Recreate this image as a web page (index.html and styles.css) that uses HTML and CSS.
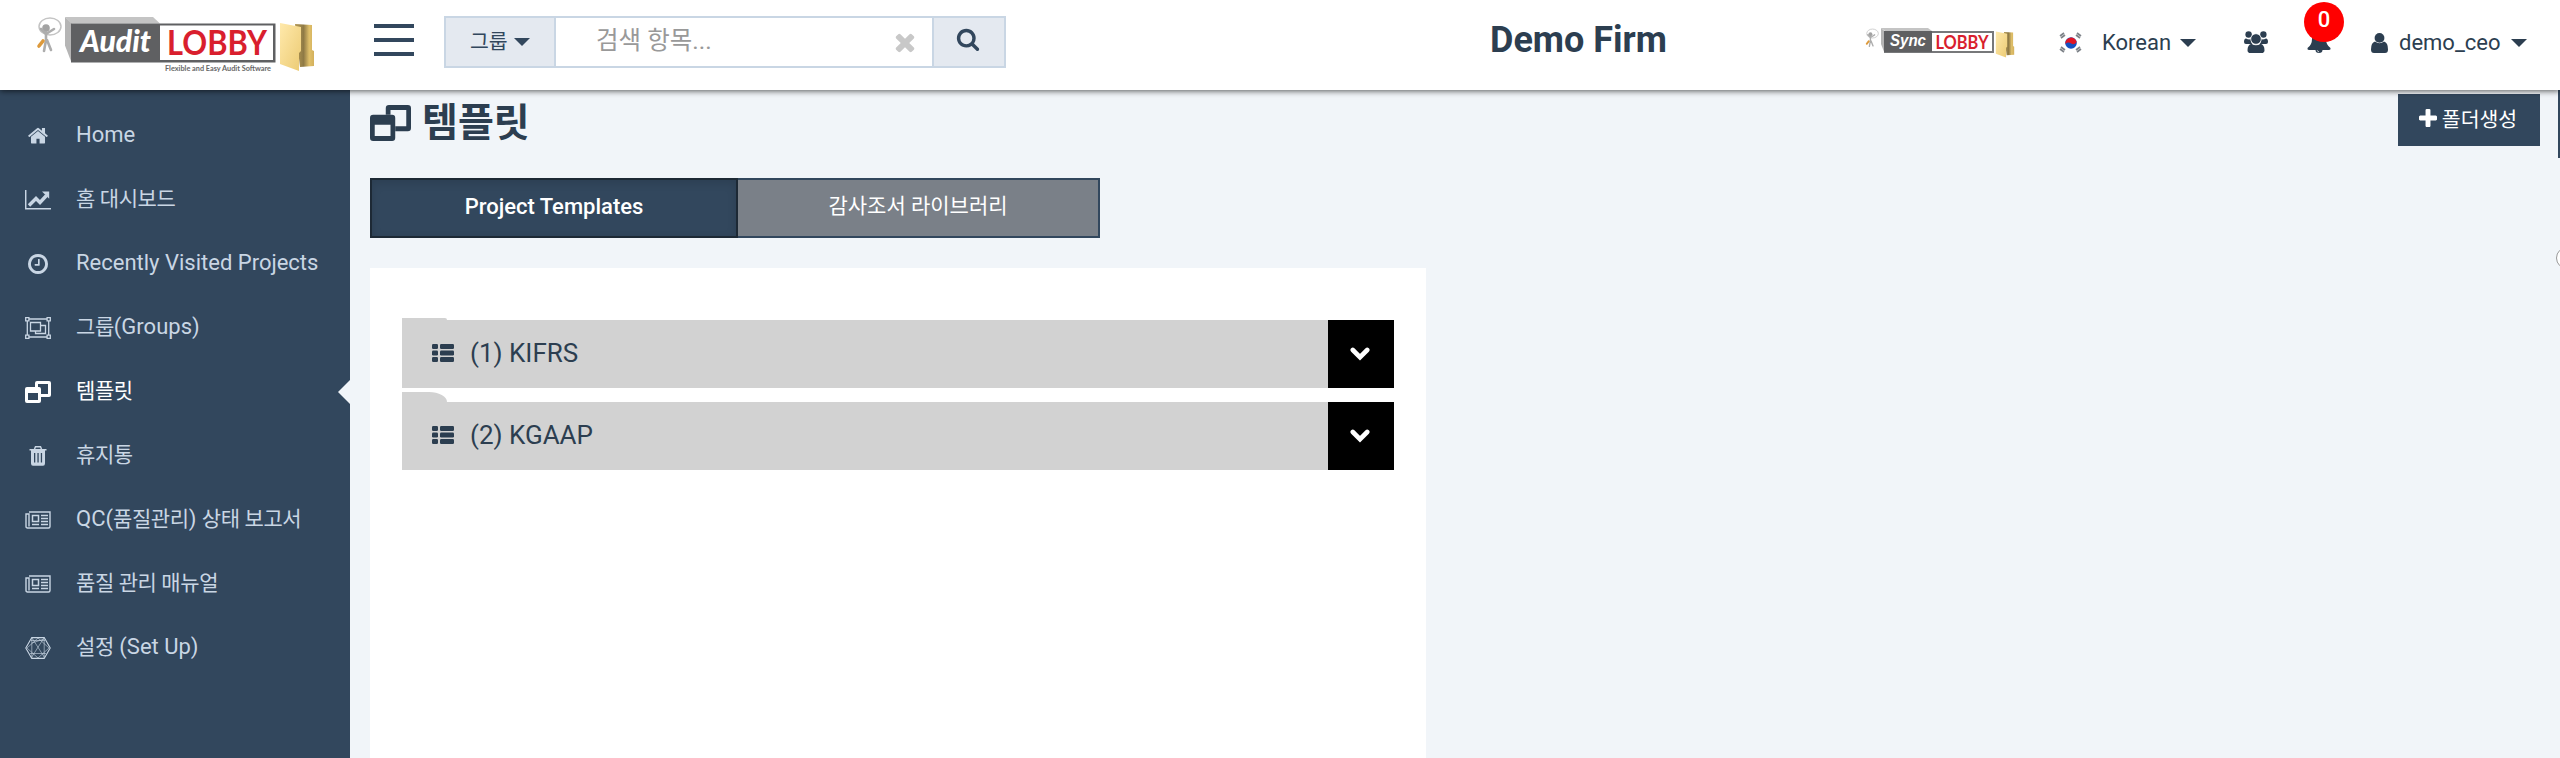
FILE: index.html
```html
<!DOCTYPE html>
<html lang="ko">
<head>
<meta charset="utf-8">
<title>Audit Lobby</title>
<link rel="stylesheet" href="styles.css">
</head>
<body>
<svg class="defs" width="0" height="0">
  <defs>
    <linearGradient id="gold" x1="0" y1="0" x2="1" y2="1"><stop offset="0" stop-color="#ffe9ab"/><stop offset="1" stop-color="#eccb74"/></linearGradient>
    <linearGradient id="goldback" x1="0" y1="0" x2="1" y2="0"><stop offset="0" stop-color="#b59a55"/><stop offset=".45" stop-color="#8f7a45"/><stop offset=".75" stop-color="#e0c06a"/><stop offset="1" stop-color="#d3b05c"/></linearGradient>
    <symbol id="mascot" viewBox="0 0 26 38">
      <ellipse cx="14" cy="10.500" rx="11" ry="8.500" fill="none" stroke="#c4c4c4" stroke-width="1.500"/>
      <circle cx="10" cy="12" r="3.800" fill="#a3a3a3"/>
      <path d="M10 16v9M10 18l-5-5M10 18l8-5M10 24l-2 11M11 24l4 10" stroke="#adadad" stroke-width="2.600" fill="none" stroke-linecap="round"/>
      <path d="M3 30l4-5" stroke="#dd9a3c" stroke-width="3.600" stroke-linecap="round"/>
    </symbol>
    <symbol id="folder" viewBox="0 0 36 50">
      <path d="M16 2l17 1v25l2 1v15l-14 1z" fill="url(#goldback)"/>
      <path d="M1 1l21 4v24l-2 2v18l-19-7z" fill="url(#gold)"/>
    </symbol>
    <symbol id="clone" viewBox="0 0 26 22">
      <path d="M12 0h12q2 0 2 2v12q0 2-2 2h-8v-3h7v-10h-10v3h-3v-4q0-2 2-2z"/>
      <path fill-rule="evenodd" d="M2 6h12q2 0 2 2v12q0 2-2 2h-12q-2 0-2-2v-12q0-2 2-2zM3 12v7h10v-7z"/>
    </symbol>
    <symbol id="news" viewBox="0 0 26 18">
      <path d="M4 1h21v14.500q0 1.500-1.500 1.500h-21q-1.500 0-1.500-1.500v-12.500h3v12.500" fill="none" stroke="currentColor" stroke-width="1.400"/>
      <path d="M7.500 4.500h6v6h-6z" fill="none" stroke="currentColor" stroke-width="1.500"/>
      <path d="M16 4.500h7M16 7.500h7M16 10.500h7M7 13.500h7M16 13.500h7" stroke="currentColor" stroke-width="1.300"/>
    </symbol>
    <symbol id="list" viewBox="0 0 22 18">
      <rect width="6" height="5" rx="1.200"/><rect x="8" width="14" height="5" rx="1.200"/>
      <rect y="6.500" width="6" height="5" rx="1.200"/><rect x="8" y="6.500" width="14" height="5" rx="1.200"/>
      <rect y="13" width="6" height="5" rx="1.200"/><rect x="8" y="13" width="14" height="5" rx="1.200"/>
    </symbol>
    <symbol id="chevron" viewBox="0 0 20 14"><path d="M2.800 3l7.200 7.200 7.200-7.200" fill="none" stroke="#fff" stroke-width="4.600" stroke-linecap="round"/></symbol>
  </defs>
</svg>

<header class="topbar">
  <a class="logo">
    <svg width="280" height="58" viewBox="36 15 280 58">
      <use href="#mascot" x="36" y="16" width="26" height="38"/>
      <path d="M65 17h88l7 6.500h-89z" fill="#c4c4c4"/>
      <path d="M65 17l6.500 6.500v39l-6.500-17z" fill="#b5b5b5"/>
      <path d="M71 23.500h204.500v39h-204.500z" fill="#5f6062"/>
      <path d="M160 25.500h113v34.500h-113z" fill="#fff"/>
      <text class="logo-word" x="80" y="52" textLength="71" lengthAdjust="spacingAndGlyphs">Audit</text>
      <text class="logo-lobby" x="167" y="55" textLength="100" lengthAdjust="spacingAndGlyphs">LOBBY</text>
      <text class="logo-tag" x="165" y="71" textLength="106" lengthAdjust="spacingAndGlyphs">Flexible and Easy Audit Software</text>
      <use href="#folder" x="279" y="22" width="36" height="50"/>
    </svg>
  </a>
  <button class="burger"><i></i><i></i><i></i></button>
  <div class="search">
    <div class="search-scope">그룹<i class="caret"></i></div>
    <div class="search-input"><span>검색 항목...</span>
      <svg width="28" height="28" viewBox="0 0 1792 1792" fill="#c8c8c8"><path d="M1490 1322q0 40-28 68l-136 136q-28 28-68 28t-68-28l-294-294-294 294q-28 28-68 28t-68-28l-136-136q-28-28-28-68t28-68l294-294-294-294q-28-28-28-68t28-68l136-136q28-28 68-28t68 28l294 294 294-294q28-28 68-28t68 28l136 136q28 28 28 68t-28 68l-294 294 294 294q28 28 28 68z"/></svg>
    </div>
    <div class="search-go"><svg width="24" height="24" viewBox="0 0 1792 1792"><path d="M1216 832q0-185-131.500-316.500t-316.500-131.500-316.500 131.500-131.500 316.500 131.500 316.500 316.500 131.500 316.500-131.500 131.500-316.500zm512 832q0 52-38 90t-90 38q-54 0-90-38l-343-342q-179 124-399 124-143 0-273.500-55.500t-225-150-150-225-55.500-273.500 55.500-273.500 150-225 225-150 273.500-55.500 273.500 55.500 225 150 150 225 55.500 273.500q0 220-124 399l343 343q37 37 37 90z"/></svg></div>
  </div>
  <h2 class="firm">Demo Firm</h2>
  <nav class="tools">
    <svg class="sync" width="150" height="32" viewBox="1865 27 150 32">
      <use href="#mascot" x="1865" y="28" width="14" height="20"/>
      <path d="M1881 28h47l4 3h-47z" fill="#c4c4c4"/>
      <path d="M1881 28l3.500 3v22l-3.500-9z" fill="#b5b5b5"/>
      <path d="M1884 31h110v22h-110z" fill="#77787a"/>
      <path d="M1884 31h48v21h-48z" fill="#5f6062"/>
      <path d="M1932 33h60v18h-60z" fill="#fff"/>
      <text class="sync-word" x="1890" y="46" textLength="36" lengthAdjust="spacingAndGlyphs">Sync</text>
      <text class="sync-lobby" x="1935.500" y="48.500" textLength="53" lengthAdjust="spacingAndGlyphs">LOBBY</text>
      <use href="#folder" x="1995" y="31" width="20" height="27"/>
    </svg>
    <div class="lang">
      <svg width="24" height="22" viewBox="0 0 24 22">
        <path d="M1 4l4-3M2 6l4-3M18 1l4 3M17 3l4 3M1 17l4 3M2 15l4 3M18 20l4-3M17 18l4-3" stroke="#7d8288" stroke-width="1.700"/>
        <circle cx="12" cy="11" r="5.800" fill="#1450c0"/>
        <path d="M6.300 12a5.800 5.800 0 0 1 11.400-2q-2.500 3.500-5.500 1.500t-5.900.500z" fill="#e01525"/>
      </svg>
      <span>Korean</span><i class="caret"></i>
    </div>
    <svg class="users" width="24" height="22" viewBox="0 0 24 22">
      <circle cx="4.600" cy="3.500" r="3.200"/><circle cx="19.400" cy="3.500" r="3.200"/>
      <path d="M2 7.500q3 1.500 5 .5-.500 3 1.200 5h-6.200q-2 0-2-2 0-3.500 2-3.500zM22 7.500q-3 1.500-5 .5.500 3-1.200 5h6.200q2 0 2-2 0-3.500-2-3.500z"/>
      <circle cx="12" cy="8" r="5.300" stroke="#fff" stroke-width=".8"/>
      <path d="M7.500 12.700q4.500 3 9 0 4 1 4 6.500 0 2.800-3 2.800h-11q-3 0-3-2.800 0-5.500 4-6.500z"/>
    </svg>
    <div class="bell">
      <svg width="24" height="24" viewBox="0 0 24 24"><path d="M12 0q7 2 7 10 0 6 4.500 9 .5 2-1.500 2h-6.500q0 3-3.500 3t-3.500-3h-6.500q-2 0-1.500-2 4.500-3 4.500-9 0-8 7-10z"/><path d="M10.300 21.300q.2 1.500 1.800 1.500" fill="none" stroke="#fff" stroke-width=".7"/></svg>
      <span class="badge">0</span>
    </div>
    <div class="user">
      <svg width="17" height="20" viewBox="0 0 17 20"><circle cx="8.500" cy="4.900" r="4.900"/><path d="M4 8.500q4.500 3.500 9 0 4 1 4 8 0 3.500-3 3.500h-11q-3 0-3-3.500 0-7 4-8z"/></svg>
      <span>demo_ceo</span><i class="caret"></i>
    </div>
  </nav>
</header>

<div class="layout">
  <aside class="sidebar">
    <a class="item"><svg width="20" height="20" viewBox="60 100 1672 1640"><path fill="currentColor" d="M1472 992v480q0 26-19 45t-45 19h-384v-384h-256v384h-384q-26 0-45-19t-19-45v-480q0-1 .5-3t.5-3l575-474 575 474q1 2 1 6zm223-69l-62 74q-8 9-21 11h-3q-13 0-21-7l-692-577-692 577q-12 8-24 7-13-2-21-11l-62-74q-8-10-7-23.500t11-21.500l719-599q32-26 76-26t76 26l244 204v-195q0-14 9-23t23-9h192q14 0 23 9t9 23v408l219 182q10 8 11 21.500t-7 23.500z"/></svg><span>Home</span></a>
    <a class="item"><svg width="26" height="20" viewBox="0 0 26 20"><path d="M.7 0v18.800h25.300" fill="none" stroke="currentColor" stroke-width="1.500"/><path d="M4 15.500l7-7 4 4 6.500-7" fill="none" stroke="currentColor" stroke-width="3.400"/><path d="M17 1.500h7.200v7.200z" fill="currentColor"/></svg><span><em>홈 대시보드</em></span></a>
    <a class="item"><svg width="20" height="20" viewBox="128 128 1536 1536"><path fill="currentColor" d="M1024 544v448q0 14-9 23t-23 9h-320q-14 0-23-9t-9-23v-64q0-14 9-23t23-9h224v-352q0-14 9-23t23-9h64q14 0 23 9t9 23zm416 352q0-148-73-273t-198-198-273-73-273 73-198 198-73 273 73 273 198 198 273 73 273-73 198-198 73-273zm224 0q0 209-103 385.500t-279.500 279.500-385.500 103-385.500-103-279.500-279.500-103-385.500 103-385.500 279.500-279.500 385.500-103 385.500 103 279.500 279.500 103 385.500z"/></svg><span>Recently Visited Projects</span></a>
    <a class="item"><svg width="26" height="22" viewBox="0 0 26 22" fill="none" stroke="currentColor" stroke-width="1.300"><path d="M4 2h18M4 20h18M2.300 4v14M23.700 4v14M.7.7h3.200v3.200h-3.200zM22.100.7h3.200v3.200h-3.200zM.7 18.100h3.200v3.200h-3.200zM22.100 18.100h3.200v3.200h-3.200zM5.500 5.500h10v8.500h-10zM16 8.500h4.500v8h-10v-2"/></svg><span><em>그룹</em>(Groups)</span></a>
    <a class="item active"><svg width="26" height="22"><use href="#clone" fill="currentColor"/></svg><span><em>템플릿</em></span></a>
    <a class="item"><svg width="18" height="20" viewBox="0 0 18 20"><path d="M5.500 3l1-2.200h5l1 2.200" fill="none" stroke="currentColor" stroke-width="1.500"/><path fill="currentColor" fill-rule="evenodd" d="M.5 3h17v1.600h-1.500v13q0 2.200-2 2.200h-10q-2 0-2-2.200v-13h-1.500zM5 7v9.500h1.300v-9.500zM8.400 7v9.500h1.300v-9.500zM11.800 7v9.500h1.300v-9.500z"/></svg><span><em>휴지통</em></span></a>
    <a class="item"><svg width="26" height="18"><use href="#news"/></svg><span>QC(<em>품질관리</em>) <em>상태 보고서</em></span></a>
    <a class="item"><svg width="26" height="18"><use href="#news"/></svg><span><em>품질 관리 매뉴얼</em></span></a>
    <a class="item"><svg width="26" height="22" viewBox="0 0 26 22" fill="none" stroke="currentColor" stroke-width=".6"><path stroke-width="1.100" d="M6.800.6h12.400l6 10.400-6 10.400h-12.400l-6-10.400z"/><path d="M6.800.6l12.800 20M19.200.6l-12.800 20M6 3.500h14M5 16.500h16M6.800 1v20M19.200 1v20M2 11l11-10 11 10-11 10zM7 6l12-4"/></svg><span><em>설정</em> (Set Up)</span></a>
  </aside>

  <main class="content">
    <div class="heading">
      <h1><svg width="41" height="36" viewBox="0 0 26 22" preserveAspectRatio="none"><use href="#clone" width="26" height="22"/></svg>템플릿</h1>
      <button class="create"><svg width="18" height="18" viewBox="192 128 1408 1408"><path d="M1600 736v192q0 40-28 68t-68 28h-416v416q0 40-28 68t-68 28h-192q-40 0-68-28t-28-68v-416h-416q-40 0-68-28t-28-68v-192q0-40 28-68t68-28h416v-416q0-40 28-68t68-28h192q40 0 68 28t28 68v416h416q40 0 68 28t28 68z"/></svg>폴더생성</button>
    </div>
    <div class="tabs"><a class="tab on">Project Templates</a><a class="tab">감사조서 라이브러리</a></div>
    <section class="panel">
      <div class="row flat"><svg width="22" height="18"><use href="#list"/></svg><span>(1) KIFRS</span><b><svg width="20" height="14"><use href="#chevron"/></svg></b></div>
      <div class="row"><svg width="22" height="18"><use href="#list"/></svg><span>(2) KGAAP</span><b><svg width="20" height="14"><use href="#chevron"/></svg></b></div>
    </section>
    <i class="edge-bar"></i>
    <i class="edge-dot"></i>
  </main>
</div>
</body>
</html>
```
FILE: styles.css
```css
* { box-sizing: border-box; }
body {
  margin: 0;
  height: 758px;
  overflow: hidden;
  display: flex;
  flex-direction: column;
  background: #f1f5f9;
  color: #2c3e50;
  font-family: Roboto, "Noto Sans CJK KR", sans-serif;
  font-size: 22px;
}
svg { display: block; flex: none; }
svg.defs { position: absolute; }
button { border: 0; padding: 0; font: inherit; }

.topbar {
  position: relative;
  z-index: 2;
  flex: none;
  height: 90px;
  display: flex;
  align-items: flex-start;
  background: #fff;
  box-shadow: 0 1px 6px rgba(0, 0, 0, .65);
  fill: #2c3e50;
}
.logo { padding: 15px 0 0 36px; width: 374px; flex: none; }
.logo-word { font: italic 900 31px Lato, sans-serif; fill: #fff; }
.logo-lobby { font: 700 35px Lato, sans-serif; fill: #d91f2e; }
.logo-tag { font: 700 7.500px Lato, sans-serif; fill: #666; }

.burger {
  width: 40px;
  margin-top: 24px;
  display: flex;
  flex-direction: column;
  gap: 10px;
  background: none;
}
.burger i { height: 4px; width: 40px; background: #32475d; }

.search {
  margin: 16px 0 0 30px;
  width: 562px;
  height: 52px;
  display: flex;
  border: 2px solid #c9d6e4;
  flex: none;
}
.search-scope {
  width: 110px;
  display: flex;
  align-items: center;
  gap: 6px;
  padding: 0 0 4px 24px;
  background: #e4e9f0;
  border-right: 2px solid #c9d6e4;
  color: #32475d;
  font-size: 20.500px;
}
.caret {
  width: 16px;
  border: 8px solid transparent;
  border-top-color: currentColor;
  border-bottom: 0;
}
.search-scope .caret { margin-top: 4px; }
.search-input {
  flex: 1;
  display: flex;
  align-items: center;
  justify-content: space-between;
  padding: 0 13px 0 40px;
  color: #999;
  font-size: 24.500px;
}
.search-input span { line-height: 36px; margin-top: -2px; }
.search-go {
  width: 72px;
  padding: 9px 0 0 22px;
  background: #e4e9f0;
  border-left: 2px solid #c9d6e4;
  fill: #32475d;
}
.firm { margin: 19px 0 0 484px; width: 375px; font-size: 36px; line-height: 42px; font-weight: 700; }
.tools { display: flex; align-items: flex-start; }
.sync { margin-top: 27px; }
.sync-word { font: italic 700 16px "Liberation Sans", sans-serif; fill: #fff; }
.sync-lobby { font: 700 18.500px Lato, sans-serif; fill: #d91f2e; }
.lang { display: flex; align-items: center; height: 26px; margin: 30px 0 0 44px; width: 185px; }
.lang span { margin: 0 9px 0 19px; }
.users { margin-top: 31px; }
.bell { position: relative; margin: 29px 0 0 39px; }
.badge {
  position: absolute;
  left: -3px;
  top: -27px;
  width: 40px;
  height: 40px;
  border-radius: 50%;
  background: #f00;
  color: #fff;
  font-weight: 500;
  line-height: 36px;
  text-align: center;
}
.user { display: flex; align-items: center; height: 26px; margin: 30px 0 0 40px; }
.user span { margin: 0 10px 0 11px; }
.lang span, .user span { line-height: 26px; padding-bottom: 1px; }

.layout { flex: 1; display: flex; min-height: 0; }
.sidebar { width: 350px; flex: none; padding-top: 14px; background: #32475d; color: #c9d6e4; }
.item { position: relative; display: flex; align-items: center; height: 64px; padding-left: 25px; white-space: nowrap; }
.item svg { width: 26px; margin-right: 25px; }
.item span { line-height: 28px; padding-bottom: 3px; }
.item em { font-style: normal; font-size: 21px; letter-spacing: -.4px; }
.item.active { color: #fff; }
.item.active::after {
  content: "";
  position: absolute;
  right: 0;
  top: 20px;
  border: 12px solid transparent;
  border-right-color: #f1f5f9;
  border-left: 0;
}

.content { position: relative; flex: 1; padding: 4px 20px 0; display: flex; flex-direction: column; }
.heading { display: flex; justify-content: space-between; height: 84px; }
h1 { margin: 0; display: flex; height: 58px; align-items: center; gap: 11px; font-size: 39px; line-height: 58px; font-weight: 700; fill: #2c3e50; }
.create {
  width: 142px;
  height: 52px;
  display: flex;
  align-items: center;
  justify-content: center;
  gap: 5px;
  background: #32475d;
  color: #fff;
  fill: #fff;
  font-size: 20.500px;
  padding: 0 2px 5px 0;
}
.tabs { display: flex; height: 60px; }
.tab {
  width: 362px;
  border: 2px solid #32475d;
  border-left: 0;
  background: #7a8088;
  color: #fff;
  font-size: 21px;
  line-height: 53px;
  text-align: center;
}
.tab.on { width: 368px; border: 2px solid #1d2935; background: #32475d; font-size: 22px; line-height: 54px; font-weight: 500; box-shadow: inset 0 3px 10px rgba(0, 0, 0, .12); }
.panel {
  flex: 1;
  width: 1056px;
  margin-top: 30px;
  padding: 52px 32px 0;
  display: flex;
  flex-direction: column;
  gap: 14px;
  background: #fff;
}
.row { position: relative; height: 68px; display: flex; align-items: center; padding-left: 30px; background: #d2d2d2; font-size: 26px; fill: #2c3e50; }
.row::before { content: ""; position: absolute; left: 0; top: -10px; width: 45px; height: 10px; background: #d2d2d2; border-top-right-radius: 18px 10px; }
.row.flat::before { top: -2px; height: 2px; border-radius: 0 2px 0 0; }
.row > svg { margin-bottom: 2px; }
.row span { flex: 1; padding: 0 0 2px 16px; }
.row b { width: 66px; height: 68px; padding-right: 2px; display: flex; align-items: center; justify-content: center; background: #000; }
.edge-bar { position: absolute; right: 0; top: 0; width: 2px; height: 68px; background: #32475d; }
.edge-dot { position: absolute; right: -18px; top: 157px; width: 22px; height: 22px; border: 1px solid #999; border-radius: 50%; background: #fff; }
```
